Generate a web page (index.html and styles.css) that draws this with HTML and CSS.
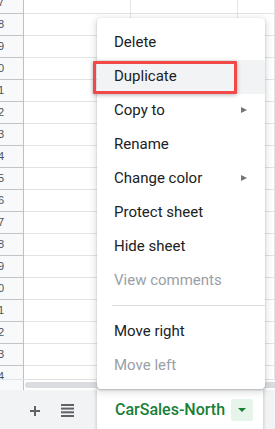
FILE: index.html
```html
<!DOCTYPE html>
<html lang="en">
<head>
    <meta charset="UTF-8">
    <title>CarSales</title>
    <link rel="stylesheet" href="styles.css">
</head>
<body>
<div class="sheet">
    <!--grid-->
    <div class="grid">
        <div class="rows">
            <div class="row"><div class="head"><span>27</span></div><div class="cell"></div><div class="cell"></div><div class="cell last"></div></div>
            <div class="row"><div class="head"><span>28</span></div><div class="cell"></div><div class="cell"></div><div class="cell last"></div></div>
            <div class="row"><div class="head"><span>29</span></div><div class="cell"></div><div class="cell"></div><div class="cell last"></div></div>
            <div class="row"><div class="head"><span>30</span></div><div class="cell"></div><div class="cell"></div><div class="cell last"></div></div>
            <div class="row"><div class="head"><span>31</span></div><div class="cell"></div><div class="cell"></div><div class="cell last"></div></div>
            <div class="row"><div class="head"><span>32</span></div><div class="cell"></div><div class="cell"></div><div class="cell last"></div></div>
            <div class="row"><div class="head"><span>33</span></div><div class="cell"></div><div class="cell"></div><div class="cell last"></div></div>
            <div class="row"><div class="head"><span>34</span></div><div class="cell"></div><div class="cell"></div><div class="cell last"></div></div>
            <div class="row"><div class="head"><span>35</span></div><div class="cell"></div><div class="cell"></div><div class="cell last"></div></div>
            <div class="row"><div class="head"><span>36</span></div><div class="cell"></div><div class="cell"></div><div class="cell last"></div></div>
            <div class="row"><div class="head"><span>37</span></div><div class="cell"></div><div class="cell"></div><div class="cell last"></div></div>
            <div class="row"><div class="head"><span>38</span></div><div class="cell"></div><div class="cell"></div><div class="cell last"></div></div>
            <div class="row"><div class="head"><span>39</span></div><div class="cell"></div><div class="cell"></div><div class="cell last"></div></div>
            <div class="row"><div class="head"><span>40</span></div><div class="cell"></div><div class="cell"></div><div class="cell last"></div></div>
            <div class="row"><div class="head"><span>41</span></div><div class="cell"></div><div class="cell"></div><div class="cell last"></div></div>
            <div class="row"><div class="head"><span>42</span></div><div class="cell"></div><div class="cell"></div><div class="cell last"></div></div>
            <div class="row"><div class="head"><span>43</span></div><div class="cell"></div><div class="cell"></div><div class="cell last"></div></div>
            <div class="row"><div class="head"><span>44</span></div><div class="cell"></div><div class="cell"></div><div class="cell last"></div></div>
        </div>
    </div>
    <!--horizontal scrollbar-->
    <div class="scroll">
        <div class="scroll-head"></div>
        <div class="thumb"></div>
    </div>
    <!--sheet tabs-->
    <div class="tabbar">
        <svg class="add" width="12" height="12" viewBox="0 0 12 12"><path d="M6 1v10M1 6h10" stroke="#5f6368" stroke-width="2" fill="none"/></svg>
        <svg class="list" width="13" height="13" viewBox="0 0 13 13"><rect x="0" y="0" width="13" height="2" fill="#5f6368"/><rect x="0" y="3.6" width="13" height="2" fill="#5f6368"/><rect x="0" y="7.3" width="13" height="2" fill="#5f6368"/><rect x="0" y="11" width="13" height="2" fill="#5f6368"/></svg>
        <div class="tab">
            <span class="tab-name">CarSales-North</span>
            <span class="tab-drop"><i></i></span>
        </div>
    </div>
</div>

<!--context menu-->
<div class="menu">
    <div class="item">Delete</div>
    <div class="item active">Duplicate</div>
    <div class="item">Copy to <i class="arrow"></i></div>
    <div class="item">Rename</div>
    <div class="item">Change color <i class="arrow"></i></div>
    <div class="item">Protect sheet</div>
    <div class="item">Hide sheet</div>
    <div class="item off">View comments</div>
    <div class="sep"></div>
    <div class="item">Move right</div>
    <div class="item off">Move left</div>
</div>
<div class="mark"></div>
</body>
</html>
```

FILE: styles.css
```css
*{
    margin: 0;
    padding: 0;
    box-sizing: border-box;
}
body{
    width: 275px;
    height: 429px;
    overflow: hidden;
    position: relative;
    font-family: Roboto, "Liberation Sans", sans-serif;
    background: #fff;
}
.grid{
    height: 379px;
    overflow: hidden;
}
.rows{
    margin-top: -8px;
}
.row{
    display: flex;
    height: 22px;
}
.head{
    width: 24px;
    flex: none;
    background: #f8f9fa;
    border-right: 1px solid #c0c0c0;
    border-bottom: 1px solid #c4c4c4;
    overflow: hidden;
}
.head span{
    display: block;
    width: 50px;
    margin-left: -27px;
    text-align: center;
    line-height: 21px;
    font-size: 11px;
    font-family: "Liberation Sans", Arial, sans-serif;
    color: #4d5156;
}
.cell{
    width: 107px;
    flex: none;
    border-right: 1px solid #e2e3e3;
    border-bottom: 1px solid #e2e3e3;
}
.cell.last{
    flex: 1;
}
.scroll{
    display: flex;
    height: 11px;
    border-top: 1px solid #e2e3e3;
}
.scroll-head{
    width: 24px;
    flex: none;
    background: #f8f9fa;
    border-right: 1px solid #c0c0c0;
}
.thumb{
    flex: 1;
    height: 6px;
    margin: 2px -20px 0 1px;
    border-radius: 4px;
    background: #dadce0;
}
.tabbar{
    display: flex;
    align-items: center;
    height: 39px;
    background: #f1f3f4;
}
.add{
    margin: 2px 0 0 29px;
}
.list{
    margin: 2px 0 0 20px;
}
.tab{
    display: flex;
    align-items: center;
    align-self: stretch;
    width: 166px;
    margin: -1px 0 0 23px;
    padding: 0 10px 0 18px;
    background: #fff;
    box-shadow: 0 1px 3px 1px rgba(60,64,67,.2);
}
.tab-name{
    flex: 1;
    font-size: 16px;
    font-weight: 500;
    color: #188038;
    white-space: nowrap;
}
.tab-drop{
    width: 22px;
    height: 22px;
    margin-top: 2px;
    border-radius: 2px;
    background: #e6f4ea;
    display: flex;
    align-items: center;
    justify-content: center;
}
.tab-drop i{
    width: 0;
    height: 0;
    border-left: 4px solid transparent;
    border-right: 4px solid transparent;
    border-top: 4px solid #188038;
}
.menu{
    position: absolute;
    left: 97px;
    top: 18px;
    width: 168px;
    padding: 8px 0 6px;
    background: #fff;
    border-radius: 4px;
    box-shadow: 0 2px 6px 2px rgba(60,64,67,.15), 0 1px 2px rgba(60,64,67,.3);
}
.item{
    display: flex;
    justify-content: space-between;
    align-items: center;
    height: 34px;
    line-height: 32px;
    padding: 0 18px 2px 17px;
    font-size: 15px;
    color: #202124;
}
.item.active{
    background: #f1f3f4;
}
.item.off{
    color: #9aa0a6;
}
.arrow{
    width: 0;
    height: 0;
    border-top: 3.5px solid transparent;
    border-bottom: 3.5px solid transparent;
    border-left: 6px solid #757575;
}
.sep{
    height: 1px;
    margin: 7px 0 9px 15px;
    background: #dadce0;
}
.mark{
    position: absolute;
    left: 93px;
    top: 61px;
    width: 144px;
    height: 33px;
    border: 3px solid #f24848;
    border-radius: 1px;
    box-shadow: 0 1px 4px rgba(0,0,0,.3);
}
```
